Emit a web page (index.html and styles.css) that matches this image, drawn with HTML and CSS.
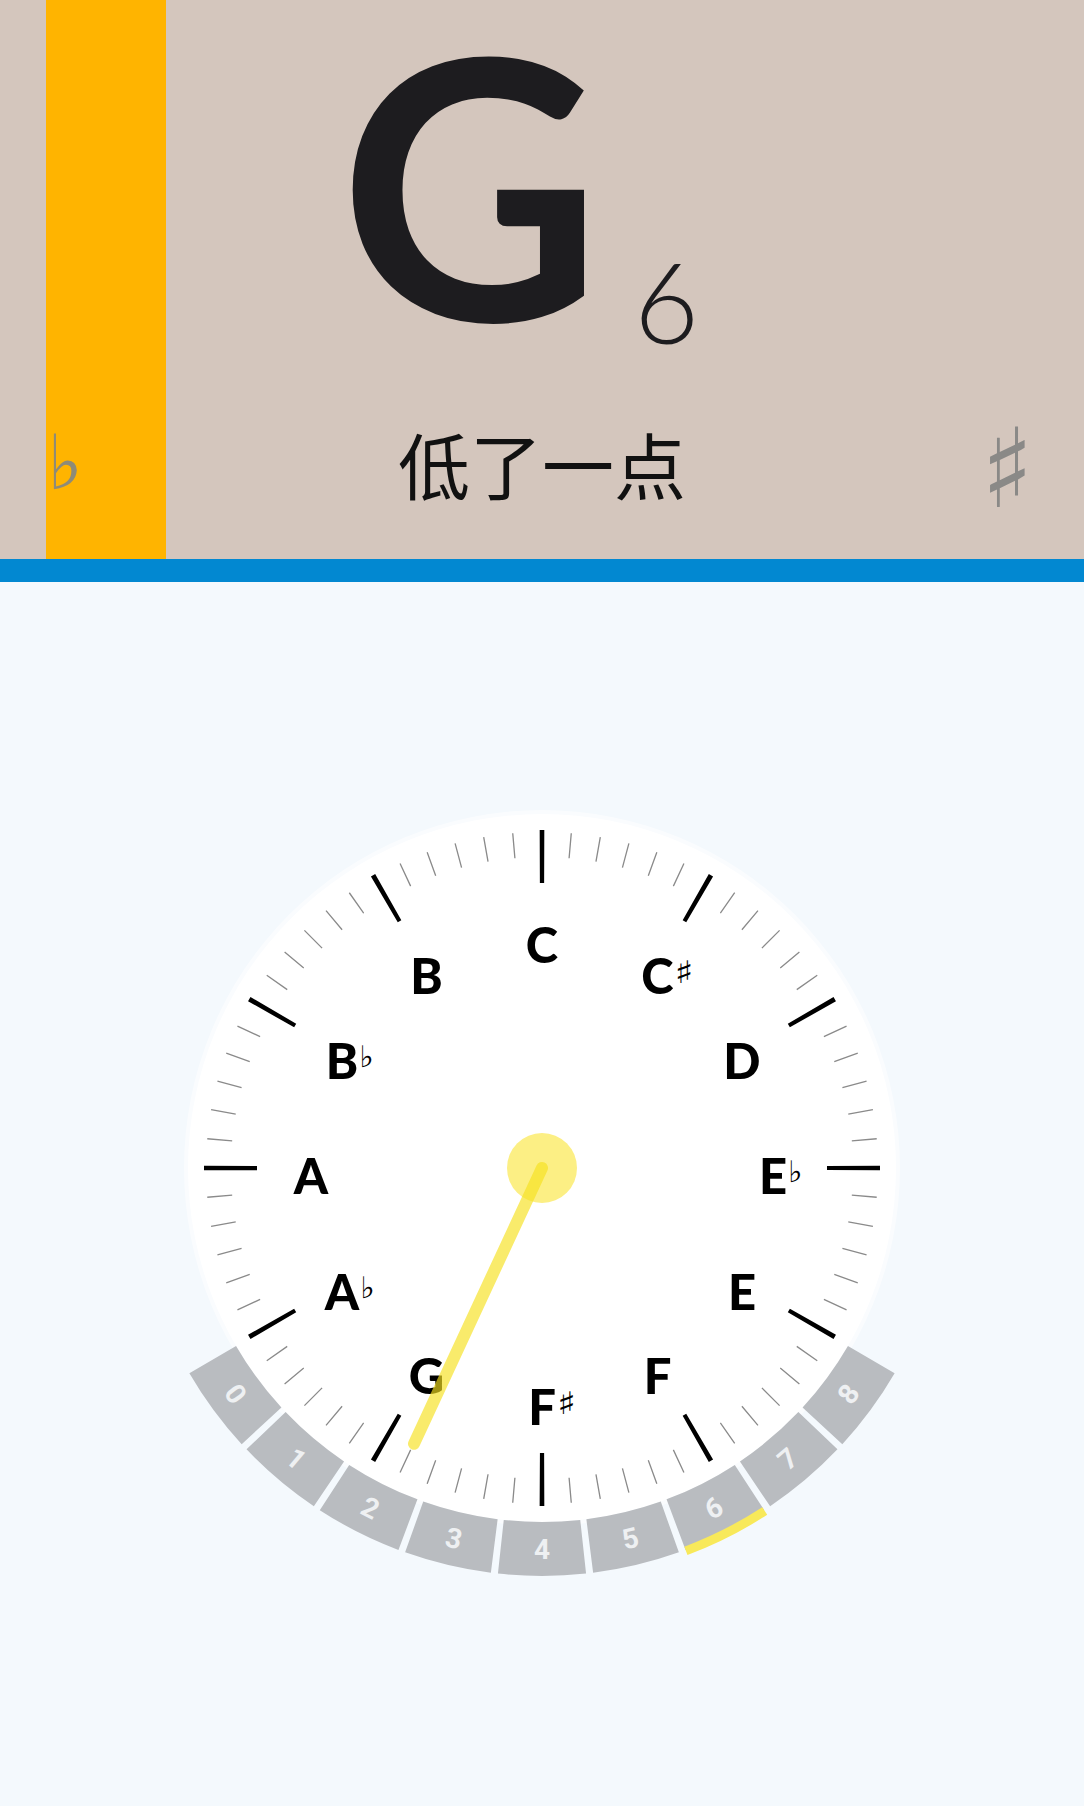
FILE: index.html
```html
<!DOCTYPE html>
<html lang="zh">
<head>
<meta charset="utf-8">
<title>Tuner</title>
<link rel="stylesheet" href="styles.css">
</head>
<body>
<header class="top">
  <div class="indicator" style="left:46px"></div>
  <div class="note"><span class="letter">G</span><span class="octave">6</span></div>
  <div class="status-row">
    <span class="flat">♭</span>
    <span class="status">低了一点</span>
    <span class="sharp">♯</span>
  </div>
</header>
<div class="divider"></div>
<main class="stage">
  <div class="dial">
    <svg class="face" width="840" height="840" viewBox="0 0 840 840">
      <circle cx="420" cy="420" r="358" fill="#ffffff" opacity="0.55"/>
      <circle cx="420" cy="420" r="354" fill="#ffffff"/>
      <circle class="minor-ticks" cx="420" cy="420" r="323.5" pathLength="360"/>
      <circle class="major-ticks" cx="420" cy="420" r="311.5" pathLength="360"/>
      <g class="octaves">
        <g transform="rotate(53.6 420 420)"><path class="seg" d="M461.15 798.77 A381 381 0 0 1 378.85 798.77"/><text x="420" y="801">0</text></g>
        <g transform="rotate(40.2 420 420)"><path class="seg" d="M461.15 798.77 A381 381 0 0 1 378.85 798.77"/><text x="420" y="801">1</text></g>
        <g transform="rotate(26.8 420 420)"><path class="seg" d="M461.15 798.77 A381 381 0 0 1 378.85 798.77"/><text x="420" y="801">2</text></g>
        <g transform="rotate(13.4 420 420)"><path class="seg" d="M461.15 798.77 A381 381 0 0 1 378.85 798.77"/><text x="420" y="801">3</text></g>
        <g><path class="seg" d="M461.15 798.77 A381 381 0 0 1 378.85 798.77"/><text x="420" y="801">4</text></g>
        <g transform="rotate(-13.4 420 420)"><path class="seg" d="M461.15 798.77 A381 381 0 0 1 378.85 798.77"/><text x="420" y="801">5</text></g>
        <g transform="rotate(-26.8 420 420)"><path class="seg" d="M461.15 798.77 A381 381 0 0 1 378.85 798.77"/><text x="420" y="801">6</text><path class="seg-active" d="M464.17 826.6 A409 409 0 0 1 375.83 826.6"/></g>
        <g transform="rotate(-40.2 420 420)"><path class="seg" d="M461.15 798.77 A381 381 0 0 1 378.85 798.77"/><text x="420" y="801">7</text></g>
        <g transform="rotate(-53.6 420 420)"><path class="seg" d="M461.15 798.77 A381 381 0 0 1 378.85 798.77"/><text x="420" y="801">8</text></g>
      </g>
    </svg>
    <div class="labels">
      <span class="label" style="left:420px;top:196px">C</span>
      <span class="label" style="left:535.5px;top:227px">C<span class="acc sharp-acc">♯</span></span>
      <span class="label" style="left:620px;top:311.5px">D</span>
      <span class="label" style="left:651px;top:427px">E<span class="acc flat-acc">♭</span></span>
      <span class="label" style="left:620px;top:542.5px">E</span>
      <span class="label" style="left:535.5px;top:627px">F</span>
      <span class="label" style="left:420px;top:658px">F<span class="acc sharp-acc">♯</span></span>
      <span class="label" style="left:304.5px;top:627px">G</span>
      <span class="label" style="left:220px;top:542.5px">A<span class="acc flat-acc">♭</span></span>
      <span class="label" style="left:189px;top:427px">A</span>
      <span class="label" style="left:220px;top:311.5px">B<span class="acc flat-acc">♭</span></span>
      <span class="label" style="left:304.5px;top:227px">B</span>
    </div>
    <svg class="pointer" width="840" height="840" viewBox="0 0 840 840">
      <circle cx="420" cy="420" r="35" fill="#fcef84"/>
      <line class="needle" x1="420" y1="420" x2="420" y2="724" transform="rotate(24.9 420 420)"/>
    </svg>
  </div>
</main>
</body>
</html>
```

FILE: styles.css
```css
html, body {
  margin: 0;
  padding: 0;
  background: #f4f9fd;
}

body {
  width: 1084px;
  min-height: 1806px;
  font-family: Lato, "Noto Sans", sans-serif;
  color: #1d1c1f;
}

.top {
  position: relative;
  height: 559px;
  background: #d4c6bd;
  overflow: hidden;
}

.indicator {
  position: absolute;
  top: 0;
  bottom: 0;
  width: 120px;
  background: #ffb400;
}

.note {
  position: relative;
  height: 362px;
  text-align: center;
  white-space: nowrap;
  line-height: 1;
  padding-right: 46px;
}

.letter {
  display: inline-block;
  font-family: Lato, sans-serif;
  font-weight: 700;
  font-size: 362px;
  line-height: 1;
}

.octave {
  display: inline-block;
  font-family: Lato, sans-serif;
  font-weight: 300;
  font-size: 112px;
  line-height: 1;
  vertical-align: -23px;
  margin-left: 32px;
}

.status-row {
  position: relative;
  display: grid;
  grid-template-columns: 1fr auto 1fr;
  grid-template-rows: 72px;
  align-items: center;
  margin-top: 65px;
  padding: 0 53px;
}

.status {
  font-family: "Noto Sans CJK SC", sans-serif;
  font-size: 72px;
  line-height: 1;
  color: #111111;
}

.flat {
  justify-self: start;
  margin-left: -6px;
  font-family: "DejaVu Sans", sans-serif;
  font-size: 76px;
  line-height: 1;
  color: #8e8b78;
}

.sharp {
  justify-self: end;
  margin-top: 12px;
  margin-right: -3px;
  font-family: "DejaVu Sans", sans-serif;
  font-weight: 700;
  font-size: 110px;
  line-height: 1;
  color: #8a8987;
}

.divider {
  height: 23px;
  background: #0288d1;
}

.stage {
  padding-top: 166px;
  padding-bottom: 40px;
}

.dial {
  position: relative;
  width: 840px;
  height: 840px;
  margin: 0 auto;
}

.face {
  display: block;
}

.minor-ticks {
  fill: none;
  stroke: #8a8a8a;
  stroke-width: 25;
  stroke-dasharray: 0.23 4.77;
  stroke-dashoffset: 0.115;
}

.major-ticks {
  fill: none;
  stroke: #000000;
  stroke-width: 53;
  stroke-dasharray: 0.83 29.17;
  stroke-dashoffset: 0.415;
}

.seg {
  fill: none;
  stroke: #b9bcc0;
  stroke-width: 54;
}

.seg-active {
  fill: none;
  stroke: #f8e95a;
  stroke-width: 9;
}

.octaves text {
  font-family: Roboto, "Open Sans", sans-serif;
  font-weight: 700;
  font-size: 28px;
  fill: #eef0f2;
  text-anchor: middle;
  dominant-baseline: central;
}

.labels {
  position: absolute;
  inset: 0;
}

.label {
  position: absolute;
  transform: translate(-50%, -50%);
  font-family: Lato, sans-serif;
  font-weight: 900;
  font-size: 49px;
  line-height: 1;
  color: #000000;
}

.acc {
  position: absolute;
  left: 100%;
  margin-left: 1px;
  font-family: "DejaVu Sans", sans-serif;
  font-weight: 700;
  line-height: 1;
  color: #000000;
  transform-origin: left top;
}

.sharp-acc {
  top: 6px;
  font-size: 31px;
  transform: scaleX(1.3);
}

.flat-acc {
  top: 6px;
  font-size: 30px;
}

.pointer {
  position: absolute;
  left: 0;
  top: 0;
}

.needle {
  stroke: rgba(246, 224, 30, 0.66);
  stroke-width: 12;
  stroke-linecap: round;
}
```
